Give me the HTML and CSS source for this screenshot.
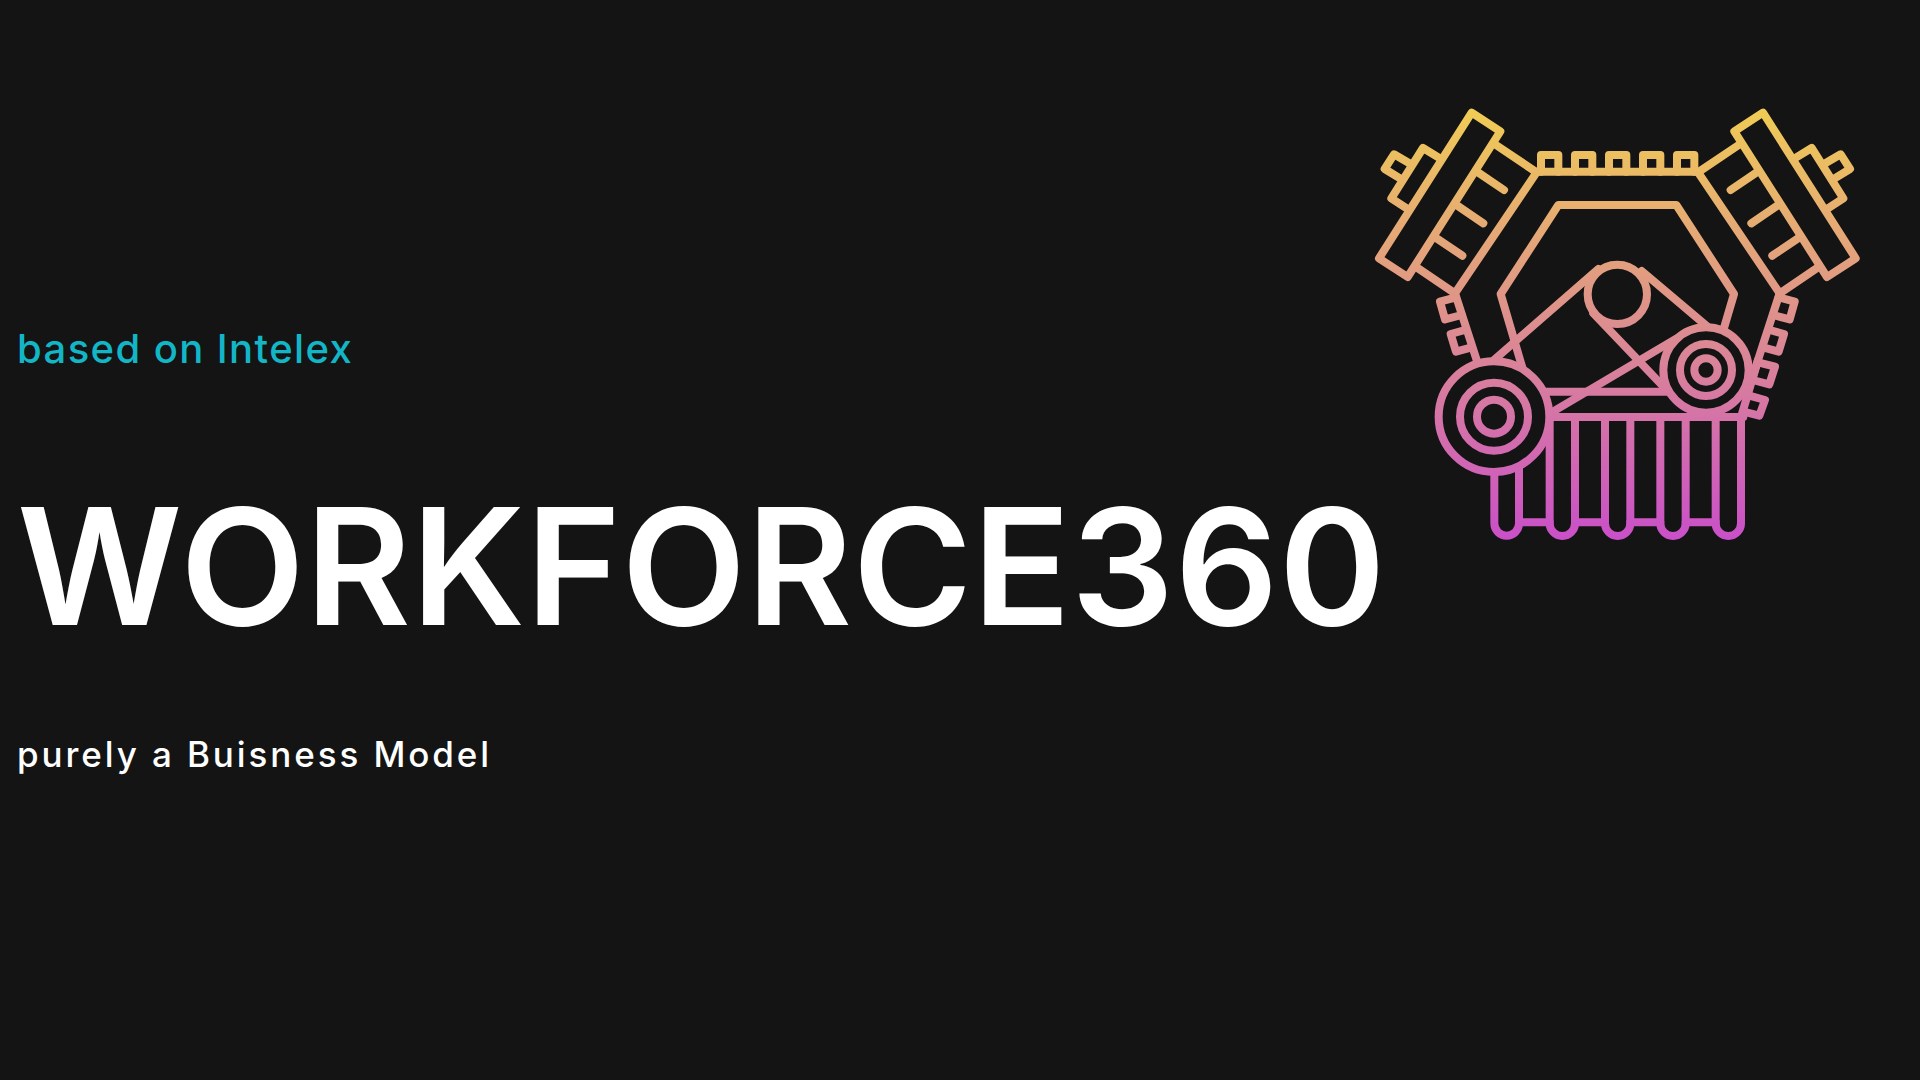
FILE: index.html
```html
<!DOCTYPE html>
<html lang="en">
<head>
<meta charset="utf-8">
<title>WORKFORCE360</title>
<link rel="stylesheet" href="styles.css">
</head>
<body>
<main class="slide">
  <p class="eyebrow">based on Intelex</p>
  <h1 class="title">WORKFORCE360</h1>
  <p class="subtitle">purely a Buisness Model</p>
  <svg class="logo" viewBox="0 0 1560 1410" aria-hidden="true">
    <defs>
      <linearGradient id="engine" gradientUnits="userSpaceOnUse" x1="0" y1="60" x2="0" y2="1345">
        <stop offset="0" stop-color="#F0CC55"/>
        <stop offset="1" stop-color="#CA50C8"/>
      </linearGradient>
      <g id="bank">
        <path d="M335,68 L421,124 L143,561 L57,505 Z"/>
        <path d="M240,205 L189,174 L94,325 L146,359"/>
        <path d="M152,222 L102,193 L74,237 L125,268"/>
        <path d="M408,165 L530,247 L285,610 L170,532"/>
        <path d="M285,610 L350,810 L365,860"/>
        <path d="M355,248 L432,300"/>
        <path d="M292,347 L370,400"/>
        <path d="M230,445 L307,497"/>
        <path d="M772,345 H595 L422,612 L495,860"/>
        <path d="M288,622 L240,635 L255,688 L305,675"/>
        <path d="M315,720 L272,732 L288,785 L335,772"/>
      </g>
    </defs>
    <g class="stroke">
      <use href="#bank"/>
      <use href="#bank" transform="matrix(-1 0 0 1 1544 0)"/>
      <path d="M530,245 H1014"/>
      <path d="M543,245 V195 H595 V245 M645,245 V195 H697 V245 M747,245 V195 H799 V245 M849,245 V195 H901 V245 M951,245 V195 H1003 V245"/>
      <path d="M1194,810 L1145,975"/>
      <path d="M1197,818 L1245,830 L1228,883 L1178,870"/>
      <path d="M1165,916 L1215,930 L1198,977 L1150,965"/>
      <path d="M715,537 L395,816"/>
      <path d="M845,543 L1045,712"/>
      <path d="M700,670 L915,895"/>
      <path d="M570,970 L950,745"/>
      <path d="M550,905 H930"/>
      <path d="M500,981 H1150"/>
      <path d="M403,981 V1300 a37,37 0 0 0 74,0 V981 M569,981 V1300 a38,38 0 0 0 76,0 V981 M735,981 V1300 a38,38 0 0 0 76,0 V981 M901,981 V1300 a38,38 0 0 0 76,0 V981 M1067,981 V1300 a38,38 0 0 0 76,0 V981"/>
      <path d="M477,1297 H569 M645,1297 H735 M811,1297 H901 M977,1297 H1067"/>
      <circle class="disc" cx="772" cy="613" r="89"/>
      <circle class="disc" cx="1038" cy="840" r="128"/>
      <circle cx="1038" cy="840" r="78"/>
      <circle cx="1038" cy="840" r="35"/>
      <circle class="disc" cx="402" cy="980" r="166"/>
      <circle cx="402" cy="980" r="102"/>
      <circle cx="402" cy="980" r="51"/>
    </g>
  </svg>
</main>
</body>
</html>
```
FILE: styles.css
```css
html, body {
  margin: 0;
  height: 100%;
  background: #141414;
}

.slide {
  position: relative;
  box-sizing: border-box;
  height: 1080px;
  overflow: hidden;
  padding: 324px 0 0 17px;
  display: flex;
  flex-direction: column;
  font-family: Inter, "Noto Sans", sans-serif;
  color: #fff;
}

.eyebrow {
  margin: 0;
  font-size: 40px;
  line-height: 50px;
  font-weight: 500;
  letter-spacing: 1.4px;
  color: #12b6c6;
}

.title {
  margin: 92px 0 0;
  font-size: 162px;
  line-height: 200px;
  font-weight: 600;
  letter-spacing: 0.5px;
  white-space: nowrap;
}

.subtitle {
  margin: 66px 0 0;
  font-size: 35px;
  line-height: 44px;
  font-weight: 500;
  letter-spacing: 2.9px;
}

.logo {
  position: absolute;
  left: 1360px;
  top: 90px;
  width: 520px;
  height: 470px;
}

.stroke {
  fill: none;
  stroke: url(#engine);
  stroke-width: 24;
  stroke-linejoin: round;
  stroke-linecap: round;
}

.disc {
  fill: #141414;
}
```
